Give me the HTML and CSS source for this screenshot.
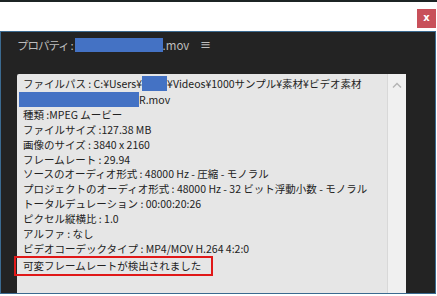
FILE: index.html
```html
<!DOCTYPE html>
<html lang="ja">
<head>
  <meta charset="UTF-8">
  <title>プロパティ</title>
  <link rel="stylesheet" href="styles.css">
</head>
<body>
  <div class="topline"></div>
  <div class="header">
    <div class="close">x</div>
  </div>

  <div class="panel">
    <div class="title">
      <span class="title-label">プロパティ :</span>
      <span class="mask title-mask"></span>
      <span>.mov</span>
      <span class="menu">≡</span>
    </div>

    <div class="info">
      <div class="lines">
        <div>ファイルパス : C:¥Users¥<span class="mask user-mask"></span>¥Videos¥1000サンプル¥素材¥ビデオ素材</div>
        <div><span class="mask name-mask"></span>R.mov</div>
        <div>種類 :MPEG ムービー</div>
        <div>ファイルサイズ :127.38 MB</div>
        <div>画像のサイズ : 3840 x 2160</div>
        <div>フレームレート : 29.94</div>
        <div>ソースのオーディオ形式 : 48000 Hz - 圧縮 - モノラル</div>
        <div>プロジェクトのオーディオ形式 : 48000 Hz - 32 ビット浮動小数 - モノラル</div>
        <div>トータルデュレーション : 00:00:20:26</div>
        <div>ピクセル縦横比 : 1.0</div>
        <div>アルファ : なし</div>
        <div>ビデオコーデックタイプ : MP4/MOV H.264 4:2:0</div>
        <div class="alert">可変フレームレートが検出されました</div>
      </div>
      <div class="scroll">
        <svg width="10" height="6" viewBox="0 0 10 6"><path d="M1 5.5 L5 1.5 L9 5.5" fill="none" stroke="#b4b4b4" stroke-width="1.4"/></svg>
      </div>
    </div>
  </div>
</body>
</html>
```

FILE: styles.css
```css
body {
  margin: 0;
  background-color: #ffffff;
  font-family: "Noto Sans CJK JP", "Noto Sans", sans-serif;
  width: 437px;
  height: 296px;
  overflow: hidden;
}

.topline {
  height: 2px;
  background-color: #1c2424;
}

.header {
  height: 29px;
  display: flex;
  justify-content: flex-end;
  align-items: flex-start;
}

.close {
  width: 19px;
  height: 19px;
  margin-top: 7px;
  margin-right: 1px;
  background-color: #c8505a;
  color: #ffffff;
  font-family: "DejaVu Sans", sans-serif;
  font-weight: bold;
  font-size: 10px;
  line-height: 17px;
  text-align: center;
}

.panel {
  box-sizing: border-box;
  width: 436px;
  height: 263px;
  border: 1px solid #3b6a90;
  background-color: #232323;
  padding: 0 29px 0 16px;
  display: flex;
  flex-direction: column;
}

.title {
  height: 42px;
  display: flex;
  align-items: flex-start;
  padding-top: 6px;
  box-sizing: border-box;
  color: #bdbdbd;
  font-size: 11.5px;
  line-height: 14px;
}

.title-label {
  letter-spacing: -1px;
}

.mask {
  display: inline-block;
  background-color: #4472c4;
}

.title-mask {
  width: 88px;
  height: 14px;
  margin-left: 2px;
}

.menu {
  margin-left: 11px;
  font-family: "DejaVu Sans", sans-serif;
  font-size: 13px;
}

.info {
  flex: 1;
  display: flex;
  background-color: #e6e6e6;
  border-radius: 2px 2px 0 0;
}

.lines {
  flex: 1;
  padding: 2px 0 0 6px;
  color: #222222;
  font-size: 10.5px;
  line-height: 14.9px;
  white-space: nowrap;
}

.user-mask {
  width: 25px;
  height: 15px;
  vertical-align: -3px;
}

.name-mask {
  width: 120px;
  height: 15px;
  margin-left: -4px;
  vertical-align: -3px;
}

.alert {
  margin-left: -9px;
  margin-top: -1px;
  padding-left: 7px;
  width: 199px;
  height: 20px;
  line-height: 16px;
  border: 2px solid #e01818;
  box-sizing: border-box;
}

.scroll {
  width: 18px;
  border-left: 1px solid #d8d8d8;
  background-color: #f0f0f0;
  display: flex;
  justify-content: center;
  padding-top: 8px;
  align-items: flex-start;
}
```
